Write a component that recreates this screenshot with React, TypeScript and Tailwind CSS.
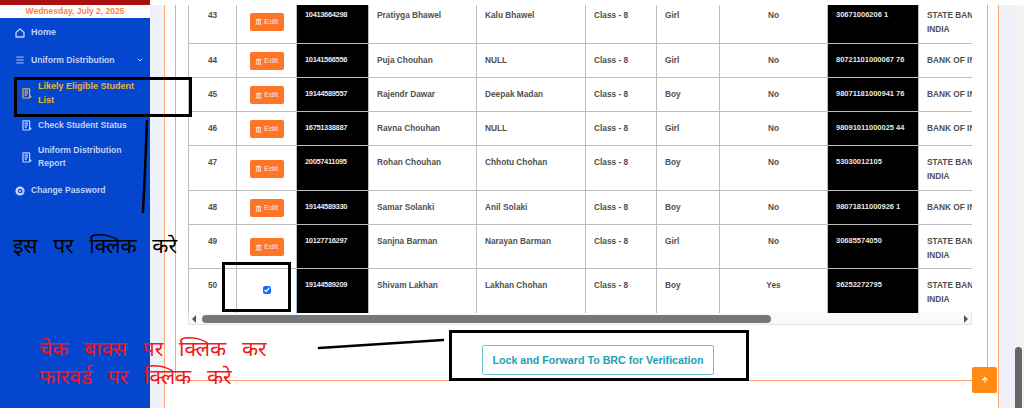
import { ArrowUp, ChevronDown, Menu } from "lucide-react";
import { FaUniversity } from "react-icons/fa";

type Row = {
  no: number;
  name: string;
  father: string;
  gender: string;
  id: string;
  account: string;
  bank: "STATE" | "BOI";
  h: string;
  locked?: boolean;
};

const rows: Row[] = [
  { no: 43, name: "Pratiyga Bhawel", father: "Kalu Bhawel", gender: "Girl", id: "10413664298", account: "30671006206 1", bank: "STATE", h: "h-[45px]" },
  { no: 44, name: "Puja Chouhan", father: "NULL", gender: "Girl", id: "10141566556", account: "80721101000067 76", bank: "BOI", h: "h-[34px]" },
  { no: 45, name: "Rajendr Dawar", father: "Deepak Madan", gender: "Boy", id: "19144589557", account: "98071181000941 76", bank: "BOI", h: "h-[34px]" },
  { no: 46, name: "Ravna Chouhan", father: "NULL", gender: "Girl", id: "16751338887", account: "98091011000025 44", bank: "BOI", h: "h-[34px]" },
  { no: 47, name: "Rohan Chouhan", father: "Chhotu Chohan", gender: "Boy", id: "20057411095", account: "53030012105", bank: "STATE", h: "h-[45px]" },
  { no: 48, name: "Samar Solanki", father: "Anil Solaki", gender: "Boy", id: "19144589330", account: "98071811000926 1", bank: "BOI", h: "h-[34px]" },
  { no: 49, name: "Sanjna Barman", father: "Narayan Barman", gender: "Girl", id: "10127716297", account: "30685574050", bank: "STATE", h: "h-[44px]" },
  { no: 50, name: "Shivam Lakhan", father: "Lakhan Chohan", gender: "Boy", id: "19144589209", account: "36252272795", bank: "STATE", h: "h-[45px]", locked: true },
];

const cell = "border border-[#bdbdbd] align-top px-2 pt-[9px] leading-[14px]";
const masked = "bg-black text-[7.5px] font-bold text-[#e8e8e8] whitespace-nowrap";

function HomeIcon() {
  return (
    <svg width="10" height="10" viewBox="0 0 10 10" fill="none" stroke="currentColor" strokeWidth="1.3" strokeLinejoin="round" className="shrink-0">
      <path d="M1 4.4 5 1l4 3.4V9H1z" />
    </svg>
  );
}

function ReportIcon() {
  return (
    <svg width="10" height="11" viewBox="0 0 10 11" fill="none" stroke="currentColor" strokeWidth="1.2" className="shrink-0">
      <rect x="1" y="0.8" width="6.6" height="9.2" rx="0.8" />
      <path d="M2.6 3.2h3.4M2.6 5.2h3.4M2.6 7.2h2.4" />
      <circle cx="8.2" cy="8.6" r="1.2" fill="currentColor" stroke="none" />
    </svg>
  );
}

function PasswordIcon() {
  return (
    <svg width="10" height="10" viewBox="0 0 10 10" className="shrink-0">
      <circle cx="5" cy="5" r="4.6" fill="currentColor" />
      <circle cx="5.1" cy="5" r="1.6" fill="none" stroke="#0546cf" strokeWidth="1.1" />
      <path d="M6.8 3.6v2.2c0 .8 1 .8 1.1 0" fill="none" stroke="#0546cf" strokeWidth="0.8" />
    </svg>
  );
}

function SubLink({ label, active }: { label: string; active?: boolean }) {
  return (
    <div className={`flex items-center gap-[6px] pl-[22px] pr-[12px] leading-[13.5px] ${active ? "text-[9px] text-[#e8b52e]" : "text-[8.6px] text-[#c0d3f6]"}`}>
      <ReportIcon />
      <span>{label}</span>
    </div>
  );
}

function Sidebar() {
  return (
    <aside className="flex w-[150px] shrink-0 flex-col bg-[#0546cf] text-[8.6px] font-bold">
      <div className="h-[5px] bg-[#a80f0f]" />
      <div className="flex h-[13px] items-center justify-center bg-white text-[8.5px] text-[#ff7f3e]">
        Wednesday, July 2, 2025
      </div>
      <div className="mt-[8px] flex h-[14px] items-center gap-[6px] pl-[15px] text-[9px] text-[#c0d3f6]">
        <HomeIcon />
        Home
      </div>
      <div className="mt-[13px] flex h-[14px] items-center gap-[6px] pl-[15px] text-[#c0d3f6]">
        <Menu size={10} strokeWidth={2.2} className="shrink-0" />
        <span>Uniform Distribution</span>
        <ChevronDown size={8} strokeWidth={3} className="ml-[15px]" />
      </div>
      <div className="mt-[13px]">
        <SubLink label="Likely Eligible Student List" active />
      </div>
      <div className="mt-[12px]">
        <SubLink label="Check Student Status" />
      </div>
      <div className="mt-[11px]">
        <SubLink label="Uniform Distribution Report" />
      </div>
      <div className="mt-[13px] flex h-[14px] items-center gap-[6px] pl-[15px] text-[#c0d3f6]">
        <PasswordIcon />
        Change Password
      </div>
    </aside>
  );
}

function StudentRow({ r }: { r: Row }) {
  return (
    <tr className={r.h}>
      <td className={`${cell} text-center`}>{r.no}</td>
      <td className={`border px-2 pt-[1px] align-middle text-center ${r.locked ? "border-[#9fbcdc]" : "border-[#bdbdbd]"}`}>
        {r.locked ? (
          <input type="checkbox" defaultChecked className="h-[8px] w-[8px] accent-[#0d6efd]" />
        ) : (
          <button className="mx-auto flex h-[18px] w-[34px] items-center justify-center gap-[2px] rounded-[2px] bg-[#ff7528] text-[8px] font-normal text-[#ffe8d8]">
            <FaUniversity size={7} className="shrink-0" />
            Edit
          </button>
        )}
      </td>
      <td className={`${cell} ${masked} tracking-[-0.35px]`}>{r.id}</td>
      <td className={cell}>{r.name}</td>
      <td className={cell}>{r.father}</td>
      <td className={cell}>Class - 8</td>
      <td className={cell}>{r.gender}</td>
      <td className={`${cell} text-center`}>{r.locked ? "Yes" : "No"}</td>
      <td className={`${cell} ${masked}`}>{r.account}</td>
      <td className={`${cell} whitespace-nowrap`}>
        {r.bank === "STATE" ? (
          <>
            STATE BANK OF
            <br />
            INDIA
          </>
        ) : (
          "BANK OF INDIA"
        )}
      </td>
    </tr>
  );
}

function StudentTable() {
  return (
    <div className="w-[784px]">
      <div className="h-[308px] overflow-hidden">
        <table className="-mt-[7px] w-[860px] table-fixed border-collapse text-[8.3px] font-bold text-[#505050]">
          <colgroup>
            <col className="w-[48px]" />
            <col className="w-[60px]" />
            <col className="w-[72px]" />
            <col className="w-[108px]" />
            <col className="w-[109px]" />
            <col className="w-[71px]" />
            <col className="w-[63px]" />
            <col className="w-[108px]" />
            <col className="w-[91px]" />
            <col className="w-[130px]" />
          </colgroup>
          <tbody>
            {rows.map((r) => (
              <StudentRow key={r.no} r={r} />
            ))}
          </tbody>
        </table>
      </div>
      <div className="flex h-[12px] items-center border-x border-b border-[#e4e4e4] bg-[#fafafa] px-[3px]">
        <span className="h-0 w-0 border-y-[4px] border-r-[4px] border-y-transparent border-r-[#555]" />
        <div className="ml-[6px] h-[8px] w-[569px] rounded-full bg-[#777]" />
        <span className="ml-auto h-0 w-0 border-y-[4px] border-l-[4px] border-y-transparent border-l-[#555]" />
      </div>
    </div>
  );
}

export default function App() {
  return (
    <div className="relative flex h-[408px] w-[1024px] overflow-hidden bg-white font-['Liberation_Sans',sans-serif]">
      <Sidebar />
      <main className="flex min-w-0 flex-1 flex-col bg-[#eff1f8]">
        <div className="h-[5px] shrink-0 bg-white" />
        <div className="flex min-h-0 flex-1 pl-[14px]">
          <div className="w-[835px] border-x border-[#ffa77a] bg-white pl-[10px] pr-[10px]">
            <div className="h-[376px] border-x border-b border-[#ff9f70] pl-[12px] pr-[15px]">
              <StudentTable />
              <div className="mt-[20px] flex justify-center pl-[36px]">
                <button className="h-[30px] w-[232px] rounded-[2px] border border-[#6cc4d0] bg-white text-[10.7px] font-bold text-[#22a0b4]">
                  Lock and Forward To BRC for Verification
                </button>
              </div>
            </div>
          </div>
          <div className="ml-auto flex w-[9px] items-end bg-[#f4f4f4]">
            <div className="h-[61px] w-[7px] rounded-t-full bg-[#666]" />
          </div>
        </div>
      </main>

      {/* scroll to top */}
      <button className="absolute left-[972px] top-[367px] flex h-[26px] w-[25px] items-center justify-center rounded-[2px] bg-[#ff8a14] text-white">
        <ArrowUp size={8} strokeWidth={3.5} />
      </button>

      {/* hand drawn notes on top of the screenshot */}
      <div className="absolute left-[14px] top-[77px] h-[40px] w-[178px] border-[3px] border-black" />
      <div className="absolute left-[222px] top-[262px] h-[50px] w-[69px] border-[3px] border-black" />
      <div className="absolute left-[449px] top-[330px] h-[51px] w-[300px] border-[3px] border-black" />
      <svg className="absolute left-0 top-0" width="1024" height="408" fill="none" stroke="#000" strokeLinecap="round">
        <path d="M147 121 L145 170 L143 212" strokeWidth="2.5" />
        <path d="M319 348 L443 340" strokeWidth="2.5" />
      </svg>
      <div className="absolute left-[13px] top-[231px] font-['DejaVu_Serif','Noto_Sans',serif] text-[21px] leading-[30px] [word-spacing:9px] text-black whitespace-nowrap">
        इस पर क्लिक करे
      </div>
      <div className="absolute left-[39px] top-[335px] font-['DejaVu_Serif','Noto_Sans',serif] text-[21px] leading-[28px] [word-spacing:9px] text-[#f01818] whitespace-nowrap">
        चेक बाक्स पर क्लिक कर
        <br />
        फारवर्ड पर क्लिक करे
      </div>
    </div>
  );
}
